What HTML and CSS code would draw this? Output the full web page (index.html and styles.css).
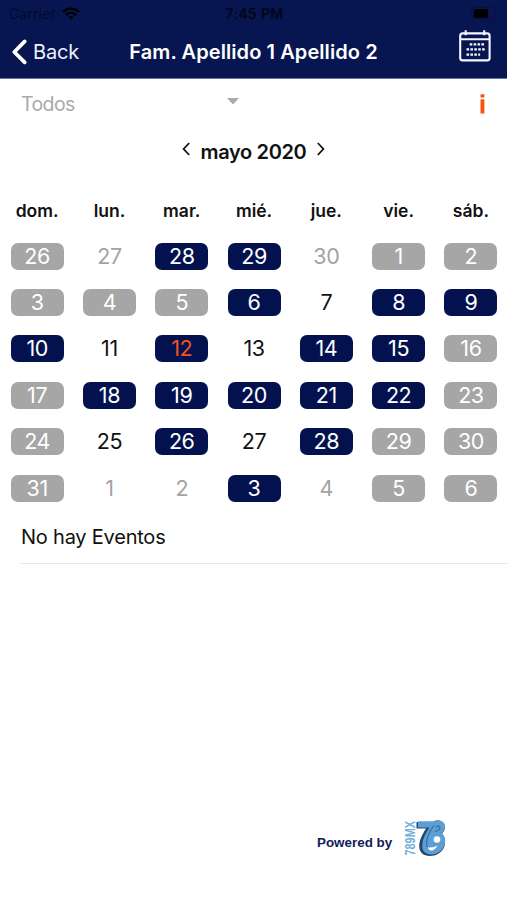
FILE: index.html
```html
<!DOCTYPE html>
<html lang="es">
<head>
<meta charset="utf-8">
<meta name="viewport" content="width=device-width, initial-scale=1">
<title>Calendario</title>
<link rel="stylesheet" href="styles.css">
</head>
<body>
<header class="header">
  <div class="status">
    <div class="carrier"><span>Carrier</span>
      <svg class="wifi" width="18" height="13" viewBox="0 0 18 13" fill="none" stroke="#000" stroke-width="2.4"><path d="M1 4.8C5.5.6 12.5.6 17 4.8M4 8C7 5.3 11 5.3 14 8"/><path d="M9 12.6 6.3 10Q9 7.9 11.7 10Z" fill="#000" stroke="none"/></svg>
    </div>
    <span class="clock">7:45 PM</span>
    <svg class="battery" width="29" height="13" viewBox="0 0 29 13"><rect x=".5" y=".5" width="24" height="12" rx="3.5" fill="none" stroke="#051043"/><rect x="2.5" y="2" width="14.5" height="9" rx="2" fill="#000"/><path d="M26.5 4.5q2 2 0 4z" fill="#051043"/></svg>
  </div>
  <nav class="nav">
    <div class="back"><svg width="15" height="26" viewBox="0 0 15 26" fill="none" stroke="#fff" stroke-width="3.8" stroke-linecap="round" stroke-linejoin="round"><path d="M12.7 2.4 2.3 13l10.4 10.3"/></svg><span>Back</span></div>
    <h1 class="title">Fam. Apellido 1 Apellido 2</h1>
    <svg class="cal-icon" width="32" height="32" viewBox="0 0 32 32" fill="none" stroke="#f5f7ff"><rect x="1.2" y="3.4" width="29.4" height="27" rx="2.5" stroke-width="2.1"/><path d="M1.5 9.3h29M6.7.3v5M25.2.3v5" stroke-width="2.1"/><path d="M10.7 14.3h15M7.5 19.4h18.2M7.5 24.7h13.6" stroke-width="2.2" stroke-dasharray="2.6 1.3"/></svg>
  </nav>
</header>
<main>
  <div class="filter">
    <span class="filter-name">Todos</span>
    <svg class="caret" width="12" height="7" viewBox="0 0 12 7"><path d="M0 0h12L6 6.5z" fill="#aaa"/></svg>
    <svg class="info" width="5" height="20" viewBox="0 0 5 20" fill="#f5530f"><rect x=".5" y=".2" width="3.9" height="3.4" rx=".6"/><rect x=".5" y="5.2" width="3.9" height="14.3" rx=".6"/></svg>
  </div>
  <div class="month">
    <svg width="9" height="14" viewBox="0 0 9 14" fill="none" stroke="#111" stroke-width="1.8"><path d="M8.2 1 2.6 7l5.600 6"/></svg>
    <h2 class="month-name">mayo 2020</h2>
    <svg width="9" height="14" viewBox="0 0 9 14" fill="none" stroke="#111" stroke-width="1.8"><path d="m.8 1 5.600 6-5.600 6"/></svg>
  </div>
  <div class="week">
    <span>dom.</span><span>lun.</span><span>mar.</span><span>mié.</span><span>jue.</span><span>vie.</span><span>sáb.</span>
  </div>
  <div class="days">
    <span class="day off">26</span><span class="day out">27</span><span class="day on">28</span><span class="day on">29</span><span class="day out">30</span><span class="day off">1</span><span class="day off">2</span>
    <span class="day off">3</span><span class="day off">4</span><span class="day off">5</span><span class="day on">6</span><span class="day">7</span><span class="day on">8</span><span class="day on">9</span>
    <span class="day on">10</span><span class="day">11</span><span class="day on today">12</span><span class="day">13</span><span class="day on">14</span><span class="day on">15</span><span class="day off">16</span>
    <span class="day off">17</span><span class="day on">18</span><span class="day on">19</span><span class="day on">20</span><span class="day on">21</span><span class="day on">22</span><span class="day off">23</span>
    <span class="day off">24</span><span class="day">25</span><span class="day on">26</span><span class="day">27</span><span class="day on">28</span><span class="day off">29</span><span class="day off">30</span>
    <span class="day off">31</span><span class="day out">1</span><span class="day out">2</span><span class="day on">3</span><span class="day out">4</span><span class="day off">5</span><span class="day off">6</span>
  </div>
  <p class="events">No hay Eventos</p>
</main>
<footer class="footer">
  <span class="powered">Powered by</span>
  <svg class="logo" width="44" height="38" viewBox="0 0 44 38">
    <text class="logo-text" transform="translate(13.2 36.5) rotate(-90)" textLength="34.5" lengthAdjust="spacingAndGlyphs">789MX</text>
    <path d="M14.500 3H31c4-3 12-1 12 5 0 3-1.500 5-3 6.500 3.500 4 4 9 2 14-2.500 5-8 8.500-14 8.500-7 0-11-4-10.800-10C17.300 21 20 16 24 9.500h-9.500z" fill="#26486d"/>
    <path d="M16 2.300H32c4-2.500 11-.5 11 5 0 3-1.500 5-3.500 6.500 4 3.500 4.500 9 2.500 13.500C39.500 32.500 34.500 35.500 29.500 35.500c-6 0-9.500-3.500-9.200-9C20.500 20.500 23 15 27.500 8.500H16z" fill="#5d9fd5"/>
    <path d="M32 6.500C27 13 24.500 19 24.500 25c0 3 2 5 5 5" fill="none" stroke="#3b6c9c" stroke-width="1.200"/>
    <path d="M34 8c2.500-2 5-.3 3.500 2-.7 1.200-2.500 2-4.500 3" fill="none" stroke="#3b6c9c" stroke-width="1.200"/>
    <circle cx="35" cy="20.500" r="3.300" fill="#fff"/><path d="M25.500 28q5 1.500 10-1.500-2.500 5-7 5-2.500-.5-3-3.500z" fill="#fff"/>
  </svg>
</footer>
</body>
</html>
```
FILE: styles.css
```css
* { box-sizing: border-box; }
body {
  margin: 0;
  height: 900px;
  display: flex;
  flex-direction: column;
  background: #fff;
  color: #111;
  font-family: Inter, "Liberation Sans", sans-serif;
}
h1, h2, p { margin: 0; }
svg { display: block; flex: none; overflow: visible; }
span, h1, h2, p { white-space: nowrap; }
.header {
  height: 79px;
  background: #071650;
  border-bottom: 1px solid #637199;
}
.status {
  height: 27px;
  padding: 1px 7px 0 9px;
  display: grid;
  grid-template-columns: 1fr auto 1fr;
  align-items: center;
  color: #020617;
  font-size: 14px;
}
.carrier { display: flex; align-items: center; gap: 6px; margin-top: -1px; color: #030a2c; letter-spacing: .15px; }
.clock { font-weight: 600; font-size: 14px; letter-spacing: .35px; margin-top: -1px; }
.battery { justify-self: end; margin-top: -2px; }
.nav {
  height: 51px;
  padding: 0 16px 0 12px;
  display: grid;
  grid-template-columns: 1fr auto 1fr;
  align-items: center;
  color: #fff;
}
.back { display: flex; align-items: center; gap: 6px; margin-top: -1px; font-size: 20px; letter-spacing: -.2px; color: #eef1ff; }
.title { padding-left: 4px; margin-top: -1px; font-size: 20px; font-weight: 600; letter-spacing: .08px; }
.cal-icon { justify-self: end; margin-top: -13px; }
.filter {
  height: 50px;
  padding: 0 22px 0 21px;
  display: flex;
  align-items: center;
  color: #aaa;
}
.filter-name { width: 206px; font-size: 19.5px; letter-spacing: -.6px; }
.caret { margin-top: -5px; }
.info { margin-left: auto; }
.month {
  height: 46px;
  display: flex;
  align-items: center;
  justify-content: center;
  gap: 10.5px;
}
.month svg { margin-top: -7px; }
.month-name { font-size: 20px; font-weight: 600; letter-spacing: -.35px; }
.week, .days {
  display: grid;
  grid-template-columns: repeat(7, 72.3px);
  padding-left: 1px;
  justify-items: center;
  align-items: center;
}
.week { height: 58px; padding-top: 13px; font-size: 17.5px; font-weight: 600; }
.days { grid-auto-rows: 46.4px; }
.day {
  width: 53px;
  height: 27px;
  border-radius: 7px;
  font-size: 21.5px;
  line-height: 27px;
  text-align: center;
  letter-spacing: -.4px;
}
.off { background: #a6a6a6; color: #fff; }
.out { color: #a3a3a3; }
.on { background: #03124e; color: #fff; }
.today { color: #f1521b; }
.events {
  height: 53px;
  margin-left: 21px;
  border-bottom: 1px solid #e8e8e8;
  font-size: 20px;
  line-height: 52px;
  letter-spacing: -.22px;
}
.footer {
  margin-top: auto;
  height: 81px;
  padding-left: 317px;
  display: flex;
  align-items: flex-start;
  gap: 10px;
}
.powered {
  font: bold 13.4px/48px "Liberation Sans", Arial, sans-serif;
  color: #111b58;
}
.logo-text { font: bold 14px "Liberation Sans", Arial, sans-serif; fill: #76afd9; }
```
